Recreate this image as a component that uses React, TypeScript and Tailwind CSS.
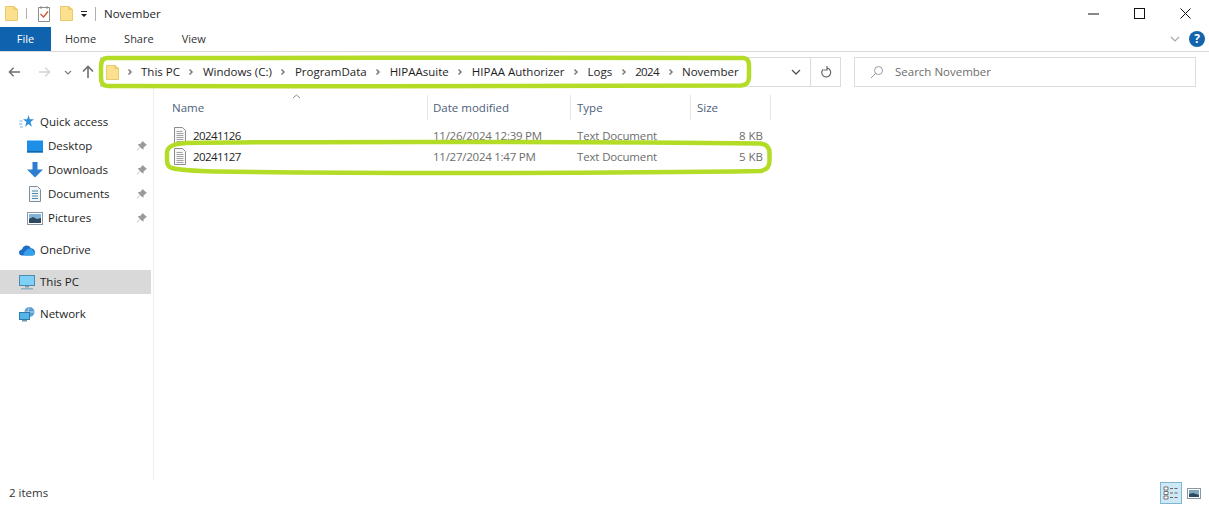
import React from 'react';

const FolderIcon = ({ className = '' }: { className?: string }) => (
  <svg className={className} width="13" height="17" viewBox="0 0 14 17" preserveAspectRatio="none">
    <path d="M0.5 1.5h9l4 3v11h-13z" fill="#fbe08f" stroke="#e9c766" strokeWidth="1" />
    <path d="M9.5 1.5v3h4" fill="#f3cf72" stroke="#e9c766" strokeWidth="1" />
  </svg>
);

const TextFileIcon = () => (
  <svg width="14" height="17" viewBox="0 0 14 17" fill="none" className="shrink-0">
    <path d="M1.5 0.5h8l3 3v13h-11z" fill="#f7f7f7" stroke="#8c8c8c" />
    <path d="M3.5 4.5h6M3.5 6.5h7M3.5 8.5h7M3.5 10.5h7M3.5 12.5h7M3.5 14.5h7" stroke="#a3a3a3" />
  </svg>
);

const Pin = () => (
  <svg width="12" height="12" viewBox="0 0 12 12" className="mr-[3px]">
    <path d="M6.5 1l4.5 4-1.3.4-2 2-.4 2.400L4 7.200 1.500 10.500 1 10l3-3L1.600 4.300 4 4l2-2z" fill="#9b9b9b" />
  </svg>
);

const Chevron = ({ className = 'mx-[8.5px]' }: { className?: string }) => (
  <svg width="6" height="8" viewBox="0 0 6 8" className={`shrink-0 ${className}`}>
    <path d="M1.500 1.500l2.500 2.500-2.500 2.500" fill="none" stroke="#7a7a7a" strokeWidth="1.500" />
  </svg>
);

const StarIcon = () => (
  <svg width="16" height="16" viewBox="0 0 16 16">
    <path d="M9.500 1l1.300 4.300H15l-3.400 2.800 1.300 4.600-3.400-2.800-3.400 2.800 1.300-4.600-3.400-2.800h4.200z" fill="#2f8fd8" />
    <path d="M0.500 7h3M0 10h3.500M1 13h3" stroke="#7dbbe8" strokeWidth="1" />
  </svg>
);

const DesktopIcon = () => (
  <svg width="16" height="13" viewBox="0 0 16 13">
    <rect x="0" y="0.500" width="16" height="12" fill="#1e8fe6" />
    <rect x="0" y="11" width="16" height="1.500" fill="#1467ab" />
  </svg>
);

const DownloadIcon = () => (
  <svg width="16" height="16" viewBox="0 0 16 16">
    <path d="M5.500 0h5v7.500H16L8 15.500 0 7.500h5.500z" fill="#2c7fd0" />
  </svg>
);

const DocumentsIcon = () => (
  <svg width="14" height="16" viewBox="0 0 14 16">
    <path d="M1.500.5h8l3 3v12h-11z" fill="#f4f7f9" stroke="#7f8f9c" />
    <path d="M4 5h6M4 7.500h6M4 10h6M4 12.500h6" stroke="#4d88a8" />
  </svg>
);

const PicturesIcon = () => (
  <svg width="16" height="13" viewBox="0 0 16 13">
    <rect x="0.500" y="0.500" width="15" height="12" fill="#fff" stroke="#8b98a3" />
    <rect x="2" y="2" width="12" height="5" fill="#7fb5d8" />
    <path d="M2 7l4-2 4 2 4-1v5H2z" fill="#2f4a5e" />
  </svg>
);

const CloudIcon = () => (
  <svg width="16" height="11" viewBox="0 0 16 11">
    <path d="M3.500 10.500C1.200 10.500 0 9 0 7.400 0 5.700 1.300 4.500 3 4.400 3.700 2 5.500.5 7.700.5c1.900 0 3.400 1 4.100 2.700C14.200 3.300 16 5 16 7.200c0 2-1.500 3.300-3.300 3.300z" fill="#1c6fc4" />
    <path d="M7 10.500c-1.500 0-2.400-1-2.400-2.200 0-1.200.9-2 2-2.100C7.300 4.500 8.700 3.500 10.400 3.500c1.500 0 3.600 1 3.900 3 1 .3 1.700 1.200 1.700 2 0 1.200-1 2-2.300 2z" fill="#35a0ec" />
  </svg>
);

const PcIcon = () => (
  <svg width="16" height="15" viewBox="0 0 16 15">
    <rect x="0.500" y="0.500" width="15" height="10" fill="#7ed0f5" stroke="#4a8bb0" />
    <rect x="6" y="11" width="4" height="1.500" fill="#7f98a8" />
    <rect x="2" y="13" width="12" height="1.500" fill="#8fb0c4" />
  </svg>
);

const NetworkIcon = () => (
  <svg width="16" height="15" viewBox="0 0 16 15">
    <circle cx="10.500" cy="5" r="5" fill="#5f9fd0" />
    <path d="M10.500 0c-2 2-2 8 0 10M5.500 5h10" stroke="#dcecf7" strokeWidth="0.700" fill="none" />
    <rect x="0.500" y="5.500" width="10" height="7" fill="#55b5e8" stroke="#2f7cab" />
    <rect x="3" y="13" width="5" height="1.500" fill="#6f97ad" />
  </svg>
);

const navGroups: { label: string; icon: React.ReactNode; pin?: boolean; indent?: boolean; selected?: boolean; gap?: boolean }[] = [
  { label: 'Quick access', icon: <StarIcon /> },
  { label: 'Desktop', icon: <DesktopIcon />, pin: true, indent: true },
  { label: 'Downloads', icon: <DownloadIcon />, pin: true, indent: true },
  { label: 'Documents', icon: <DocumentsIcon />, pin: true, indent: true },
  { label: 'Pictures', icon: <PicturesIcon />, pin: true, indent: true },
  { label: 'OneDrive', icon: <CloudIcon />, gap: true },
  { label: 'This PC', icon: <PcIcon />, selected: true, gap: true },
  { label: 'Network', icon: <NetworkIcon />, gap: true },
];

const crumbs = ['This PC', 'Windows (C:)', 'ProgramData', 'HIPAAsuite', 'HIPAA Authorizer', 'Logs', '2024', 'November'];

const files = [
  { name: '20241126', date: '11/26/2024 12:39 PM', type: 'Text Document', size: '8 KB' },
  { name: '20241127', date: '11/27/2024 1:47 PM', type: 'Text Document', size: '5 KB' },
];

const App: React.FC = () => {
  return (
    <div className="relative flex h-[506px] w-[1209px] flex-col overflow-hidden bg-white font-['Open_Sans',sans-serif] text-[11.5px] text-[#1e1e1e]">
      {/* title bar */}
      <div className="flex h-[27px] shrink-0 items-center">
        <FolderIcon className="ml-[5px]" />
        <div className="ml-[8px] h-[11px] w-px bg-[#b0b0b0]" />
        <svg width="14" height="17" viewBox="0 0 14 17" className="ml-[10px]">
          <path d="M1.500 2.500h11v14h-11z" fill="#fff" stroke="#8c8c8c" />
          <path d="M4 1v3M10 1v3" stroke="#8c8c8c" />
          <path d="M3.500 9l3 3 4.500-5.500" fill="none" stroke="#d0552f" strokeWidth="1.300" />
        </svg>
        <FolderIcon className="ml-[9px]" />
        <svg width="8" height="8" viewBox="0 0 8 8" className="ml-[7px]">
          <path d="M1 1h6v1H1zM1 4h6L4 7z" fill="#222" />
        </svg>
        <div className="ml-[7px] h-[14px] w-px bg-[#b0b0b0]" />
        <span className="ml-[8px]">November</span>
        <div className="ml-auto flex items-center">
          <svg width="11" height="11" viewBox="0 0 11 11" className="mr-[35px]">
            <path d="M0 6h11" stroke="#111" />
          </svg>
          <svg width="11" height="11" viewBox="0 0 11 11" className="mr-[35px]">
            <rect x="0.500" y="0.500" width="10" height="10" fill="none" stroke="#111" />
          </svg>
          <svg width="11" height="11" viewBox="0 0 11 11" className="mr-[18px]">
            <path d="M.5.500l10 10M10.500.500l-10 10" stroke="#111" />
          </svg>
        </div>
      </div>

      {/* ribbon tabs */}
      <div className="flex h-[25px] shrink-0 items-stretch border-b border-[#dadada] text-[11px]">
        <div className="flex w-[51px] items-center justify-center bg-[#0f62ad] text-white">File</div>
        <div className="ml-[14px] flex items-center text-[#333]">Home</div>
        <div className="ml-[28px] flex items-center text-[#333]">Share</div>
        <div className="ml-[28px] flex items-center text-[#333]">View</div>
        <div className="ml-auto mr-[4px] flex items-center gap-[9px]">
          <svg width="10" height="6" viewBox="0 0 10 6">
            <path d="M1 1l4 4 4-4" fill="none" stroke="#a9a9a9" strokeWidth="1.200" />
          </svg>
          <div className="flex h-4 w-4 items-center justify-center rounded-full bg-[#1463ad] text-[12px] font-bold text-white">?</div>
        </div>
      </div>

      {/* address row */}
      <div className="flex h-[36px] shrink-0 items-center pb-[1px] pt-[5px]">
        <div className="flex w-[100px] items-center">
          <svg width="13" height="12" viewBox="0 0 14 12" className="ml-[8px]">
            <path d="M13 6H2M6 1.500L1.500 6 6 10.500" fill="none" stroke="#6f6f6f" strokeWidth="1.500" />
          </svg>
          <svg width="13" height="12" viewBox="0 0 14 12" className="ml-[17px]">
            <path d="M1 6h11M8 1.500L12.500 6 8 10.500" fill="none" stroke="#d4d4d4" strokeWidth="1.500" />
          </svg>
          <svg width="8" height="5" viewBox="0 0 8 5" className="ml-[13px]">
            <path d="M1 1l3 3 3-3" fill="none" stroke="#7c7c7c" strokeWidth="1.200" />
          </svg>
          <svg width="12" height="14" viewBox="0 0 12 14" className="ml-[10px]">
            <path d="M6 13V2M1 6.500L6 1.500l5 5" fill="none" stroke="#6f6f6f" strokeWidth="1.600" />
          </svg>
        </div>
        <div className="flex h-[30px] w-[741px] items-center border border-[#dcdcdc]">
          <FolderIcon className="ml-[5px] shrink-0" />
          <Chevron className="ml-[8px] mr-[8px]" />
          <div className="flex items-center whitespace-nowrap">
            {crumbs.map((crumb, i) => (
              <React.Fragment key={crumb}>
                {i > 0 && <Chevron />}
                <span className={crumb === '2024' ? 'tracking-[-0.6px]' : ''}>{crumb}</span>
              </React.Fragment>
            ))}
          </div>
          <div className="ml-auto flex h-full items-center">
            <svg width="10" height="6" viewBox="0 0 10 6" className="mr-[9px]">
              <path d="M1 1l4 4 4-4" fill="none" stroke="#555" strokeWidth="1.300" />
            </svg>
            <div className="flex h-full w-[30px] items-center justify-center border-l border-[#dcdcdc]">
              <svg width="12" height="13" viewBox="0 0 12 13">
                <path d="M3 3.300a4.500 4.500 0 1 0 4-1.300M7 0v4H3.500" fill="none" stroke="#666" strokeWidth="1.200" />
              </svg>
            </div>
          </div>
        </div>
        <div className="ml-[13px] flex h-[30px] w-[342px] items-center border border-[#dcdcdc] text-[#6d6d6d]">
          <svg width="14" height="14" viewBox="0 0 14 14" className="ml-[15px]">
            <circle cx="8.500" cy="5.500" r="4" fill="none" stroke="#9a9a9a" />
            <path d="M5.500 8.500L1 13" stroke="#9a9a9a" />
          </svg>
          <span className="ml-[11px]">Search November</span>
        </div>
      </div>

      {/* main */}
      <div className="flex min-h-0 flex-1">
        <nav className="w-[154px] shrink-0 border-r border-[#efefef] pt-[22px]">
          {navGroups.map(item => (
            <div
              key={item.label}
              className={`flex h-6 w-[151px] items-center ${item.indent ? 'pl-[27px]' : 'pl-[19px]'} ${item.gap ? 'mt-2' : ''} ${item.selected ? 'bg-[#d9d9d9]' : ''}`}
            >
              <span className="flex w-[16px] shrink-0 justify-center">{item.icon}</span>
              <span className="ml-[5px]">{item.label}</span>
              {item.pin && <span className="ml-auto"><Pin /></span>}
            </div>
          ))}
        </nav>

        <div className="min-w-0 flex-1 pt-[7px]">
          <div className="relative grid h-[25px] grid-cols-[256px_143px_120px_80px] pl-[18px] text-[#4c607a]">
            <div className="flex items-center border-r border-[#e5e5e5]">Name</div>
            <div className="flex items-center border-r border-[#e5e5e5] pl-[5px]">Date modified</div>
            <div className="flex items-center border-r border-[#e5e5e5] pl-[6px]">Type</div>
            <div className="flex items-center border-r border-[#e5e5e5] pl-[6px]">Size</div>
            <svg width="9" height="5" viewBox="0 0 9 5" className="absolute left-[138px] top-[-1px]">
              <path d="M1 4l3.500-3L8 4" fill="none" stroke="#8a8a8a" />
            </svg>
          </div>
          <div className="pt-[5px]">
            {files.map(file => (
              <div key={file.name} className="grid h-[21px] grid-cols-[254px_144px_120px_72px] items-center pl-[19px]">
                <div className="flex items-center gap-[6px]">
                  <TextFileIcon />
                  <span className="tracking-[-0.6px]">{file.name}</span>
                </div>
                <div className="pl-[6px] tracking-[-0.25px] text-[#6d6d6d]">{file.date}</div>
                <div className="pl-[6px] tracking-[-0.15px] text-[#6d6d6d]">{file.type}</div>
                <div className="text-right text-[#6d6d6d]">{file.size}</div>
              </div>
            ))}
          </div>
        </div>
      </div>

      {/* status bar */}
      <div className="flex h-[26px] shrink-0 items-center justify-between pl-[9px] pr-[8px]">
        <span className="text-[#333]">2 items</span>
        <div className="flex items-center gap-[5px]">
          <div className="flex h-[22px] w-[22px] items-center justify-center border border-[#7fb6d6] bg-[#cfe8f6]">
            <svg width="16" height="14" viewBox="0 0 16 14">
              <path d="M1 1h4v3H1zM1 5.500h4v3H1zM1 10h4v3H1z" fill="#fff" stroke="#555" strokeWidth="0.800" />
              <path d="M7 2.500h3M11.500 2.500h3M7 7h3M11.500 7h3M7 11.500h3M11.500 11.500h3" stroke="#666" />
            </svg>
          </div>
          <svg width="14" height="11" viewBox="0 0 14 11">
            <rect x="0.500" y="0.500" width="13" height="10" fill="#fff" stroke="#8b98a3" />
            <rect x="2" y="2" width="10" height="7" fill="#7fa8bf" />
            <path d="M2 6l4-1 6 2v2H2z" fill="#2f4a5e" />
          </svg>
        </div>
      </div>

      {/* green marker highlights drawn over the window */}
      <svg className="pointer-events-none absolute left-0 top-0" width="1209" height="506" viewBox="0 0 1209 506" fill="none">
        <path
          d="M107 58C300 57.500 600 58 743 58c4 0 6 2 6 8v11c0 6-3 8-8 8.500C600 86.500 300 86.500 108 86c-5 0-7-3-7-8V67c0-6 2-9 6-9z"
          stroke="#b2dc26"
          strokeWidth="4.500"
        />
        <path
          d="M186 143C300 141.500 600 141.500 760 143.500C766 144 769.500 147 769.500 153V161C769.500 167 766 170 761 171C600 173.500 350 173.500 215 171.500C195 171 180 170 172 168C168 167 167 164 167 160V153C167 147 172 144 186 143Z"
          stroke="#b2dc26"
          strokeWidth="4.500"
        />
      </svg>
    </div>
  );
};

export default App;
